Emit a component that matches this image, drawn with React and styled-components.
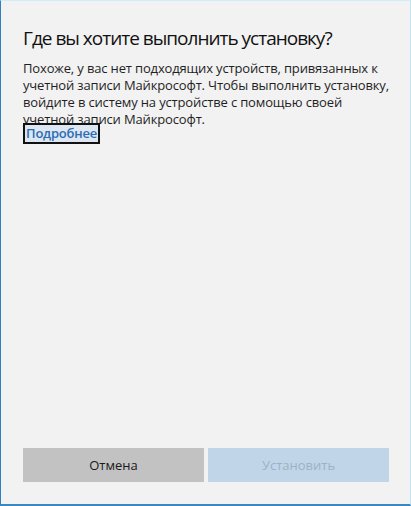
import React from 'react'
import styled, { createGlobalStyle } from 'styled-components'

const GlobalStyle = createGlobalStyle`
  html, body {
    margin: 0;
    padding: 0;
    background: #f2f2f2;
  }
  * {
    box-sizing: border-box;
  }
`

const Dialog = styled.div`
  width: 411px;
  height: 506px;
  display: flex;
  flex-direction: column;
  padding: 22.6px 21px 22px 22px;
  background: #f2f2f2;
  border-left: 1px solid #2f7fc4;
  border-top: 1px solid #cdeef8;
  border-right: 1px solid #c3e2f2;
  border-bottom: 2px solid #3a88c2;
  font-family: "Open Sans", "Noto Sans", sans-serif;
  color: #1a1a1a;
`

const Title = styled.h1`
  margin: 0 0 8.9px;
  font-size: 19px;
  font-weight: 400;
  line-height: 28px;
  letter-spacing: -1px;
  color: #111;
`

const Body = styled.p`
  margin: 0;
  font-size: 13px;
  line-height: 17px;
  letter-spacing: -0.15px;
  color: #1f1f1f;
`

const MoreLink = styled.a`
  display: inline-block;
  align-self: flex-start;
  position: relative;
  margin-top: -5px;
  padding: 0 1px;
  border: 2px solid #111;
  background: #dce7f2;
  color: #2d6cb5;
  font-size: 13px;
  font-weight: 600;
  line-height: 17px;
  letter-spacing: -0.2px;
  text-decoration: none;
`

const Actions = styled.div`
  margin-top: auto;
  display: grid;
  grid-template-columns: 1fr 1fr;
  gap: 4px;
`

const Button = styled.button`
  height: 34px;
  border: none;
  font-family: inherit;
  font-size: 13px;
  font-weight: ${p => (p.$primary ? 400 : 500)};
  background: ${p => (p.$primary ? '#c0d6e8' : '#c2c2c2')};
  color: ${p => (p.$primary ? '#9cb2c4' : '#1a1a1a')};
  cursor: ${p => (p.disabled ? 'default' : 'pointer')};
`

export default function App() {
  return (
    <>
      <GlobalStyle />
      <Dialog>
        <Title>Где вы хотите выполнить установку?</Title>
        <Body>
          Похоже, у вас нет подходящих устройств, привязанных к учетной записи
          Майкрософт. Чтобы выполнить установку, войдите в систему на
          устройстве с помощью своей
          <br />
          учетной записи Майкрософт.
        </Body>
        <MoreLink href="#">Подробнее</MoreLink>
        <Actions>
          <Button>Отмена</Button>
          <Button $primary disabled>
            Установить
          </Button>
        </Actions>
      </Dialog>
    </>
  )
}
